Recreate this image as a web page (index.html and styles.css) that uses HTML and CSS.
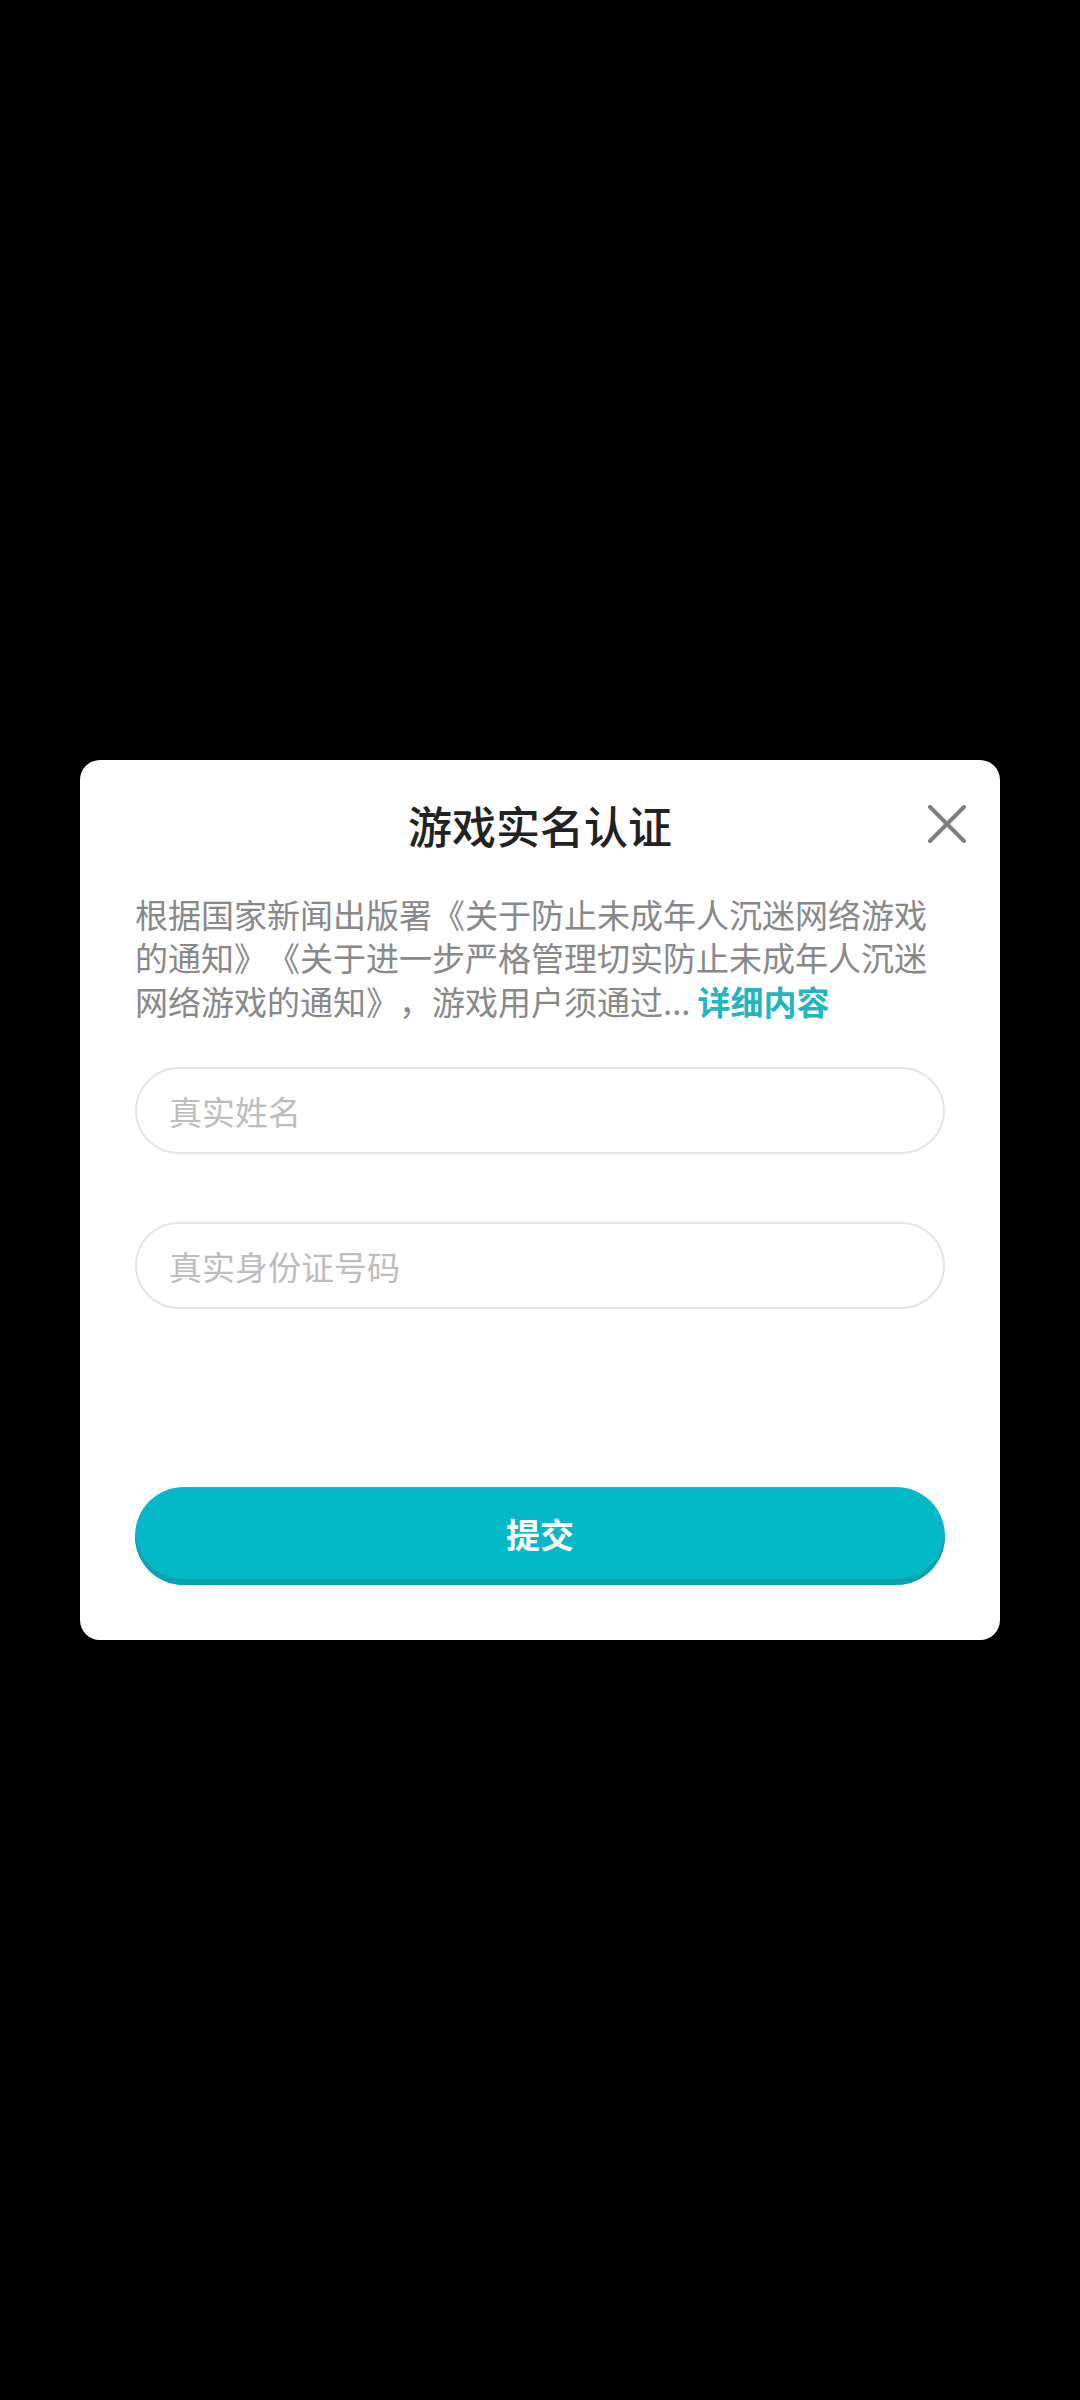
FILE: index.html
```html
<!DOCTYPE html>
<html lang="zh-CN">
<head>
<meta charset="utf-8">
<title>游戏实名认证</title>
<link rel="stylesheet" href="styles.css">
</head>
<body>
<div class="screen">
  <div class="dialog">
    <div class="header">
      <h1 class="title">游戏实名认证</h1>
      <button class="close" aria-label="关闭">
        <svg viewBox="0 0 38 38" width="38" height="38"><path d="M2 2 L36 36 M36 2 L2 36" stroke="#7f7f7f" stroke-width="4" stroke-linecap="round" fill="none"/></svg>
      </button>
    </div>
    <p class="notice"><span class="notice-text">根据国家新闻出版署《关于防止未成年人沉迷网络游戏的通知》《关于进一步严格管理切实防止未成年人沉迷网络游戏的通知》，游戏用户须通过...</span><span class="more">详细内容</span></p>
    <div class="fields">
      <div class="field"><span class="placeholder">真实姓名</span></div>
      <div class="field"><span class="placeholder">真实身份证号码</span></div>
    </div>
    <button class="submit">提交</button>
  </div>
</div>
</body>
</html>
```

FILE: styles.css
```css
html, body {
  margin: 0;
  padding: 0;
  background: #000;
}
body {
  font-family: "Noto Sans CJK SC", "Noto Sans", sans-serif;
  text-spacing-trim: space-all;
}
.screen {
  width: 1080px;
  height: 2400px;
  display: flex;
  align-items: center;
  justify-content: center;
}
.dialog {
  position: relative;
  width: 920px;
  box-sizing: border-box;
  background: #fff;
  border-radius: 20px;
  padding: 34px 55px 55px;
  display: flex;
  flex-direction: column;
}
.header {
  height: 62px;
  display: flex;
  align-items: center;
  justify-content: center;
}
.title {
  margin: 0;
  font-size: 44px;
  font-weight: 500;
  color: #222;
  line-height: 62px;
}
.close {
  position: absolute;
  top: 45px;
  right: 34px;
  width: 38px;
  height: 38px;
  padding: 0;
  border: none;
  background: none;
}
.close svg {
  display: block;
}
.notice {
  margin: 37px 0 0;
  font-size: 33px;
  line-height: 43.5px;
  color: #888;
  text-spacing-trim: space-all;
}
.more {
  color: #1fb5c1;
  font-weight: 700;
  margin-left: 7px;
}
.fields {
  margin-top: 44px;
  display: flex;
  flex-direction: column;
  gap: 68px;
}
.field {
  height: 87px;
  box-sizing: border-box;
  border: 2px solid #e6e6e6;
  border-radius: 44px;
  padding: 0 32px;
  display: flex;
  align-items: center;
}
.placeholder {
  font-size: 33px;
  color: #bdbdbd;
}
.submit {
  margin-top: 178px;
  height: 98px;
  border: none;
  border-radius: 49px;
  background: #03b9c8;
  box-shadow: inset 0 -6px 0 #0aa2ae;
  color: #fff;
  font-family: "Noto Sans CJK SC", "Noto Sans", sans-serif;
  font-size: 34px;
  font-weight: 700;
  padding: 0 0 6px;
}
```
